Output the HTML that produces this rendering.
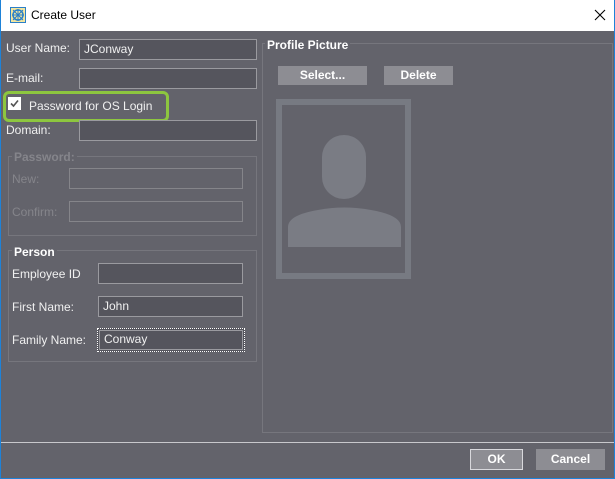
<!DOCTYPE html>
<html><head><meta charset="utf-8"><style>
*{box-sizing:border-box;margin:0;padding:0}
body{width:615px;height:479px;overflow:hidden;background:#1e82d8;font-family:"Liberation Sans",Arial,sans-serif;font-size:12px;position:relative}
.a{position:absolute}
#title{left:1px;top:0;width:613px;height:31px;background:#fff}
#main{left:1px;top:31px;width:613px;height:447px;background:#63636b}
.lbl{color:#f0f0f0;font-size:12px;white-space:nowrap}
.dis{color:#85858b}
.in{background:#55555d;border:1px solid #9a9a9f;color:#f0f0f0;padding:2px 4px;line-height:15px;font-size:12px}
.din{border-color:#85858a;background:#63636b}
.grp{border:1px solid #76767d}
.gt{background:#63636b;padding:0 2px;font-weight:bold;font-size:12px}
.btn{background:#8d8d93;color:#fff;font-weight:bold;text-align:center;font-size:12px}
</style></head><body>
<div id="title" class="a">
 <svg class="a" style="left:9px;top:7px" width="16" height="16" viewBox="0 0 16 16"><rect x="0.5" y="0.5" width="15" height="15" fill="#f3e6a0" stroke="#2a7fc8"/><circle cx="8" cy="8" r="5" fill="none" stroke="#2a7fc8" stroke-width="1.5"/><path d="M3 3L13 13M13 3L3 13M8 2V14M2 8H14" stroke="#2a7fc8" stroke-width="1"/></svg>
 <div class="a" style="left:30px;top:8px;font-size:12px;color:#000">Create User</div>
 <svg class="a" style="left:593px;top:9px" width="12" height="12" viewBox="0 0 12 12"><path d="M1 1L11 11M11 1L1 11" stroke="#000" stroke-width="1.1"/></svg>
</div>
<div id="main" class="a"></div>

<div class="a lbl" style="left:6px;top:41px">User Name:</div>
<div class="a in" style="left:79px;top:39px;width:178px;height:21px">JConway</div>
<div class="a lbl" style="left:6px;top:71px">E-mail:</div>
<div class="a in" style="left:79px;top:68px;width:178px;height:21px"></div>
<div class="a" style="left:3px;top:91px;width:166px;height:31px;border:3px solid #8dc63f;border-radius:6px"></div>
<div class="a" style="left:8px;top:97px;width:13px;height:13px;background:#fff"></div>
<svg class="a" style="left:8px;top:97px" width="13" height="13" viewBox="0 0 13 13"><path d="M3 6.5L5.5 9L10 3.5" fill="none" stroke="#555" stroke-width="1.6"/></svg>
<div class="a lbl" style="left:29px;top:99px">Password for OS Login</div>
<div class="a lbl" style="left:6px;top:123px">Domain:</div>
<div class="a in" style="left:79px;top:120px;width:178px;height:21px"></div>

<div class="a grp" style="left:8px;top:156px;width:249px;height:80px"></div>
<div class="a gt dis" style="left:12px;top:150px">Password:</div>
<div class="a lbl dis" style="left:12px;top:172px">New:</div>
<div class="a in din" style="left:69px;top:168px;width:174px;height:21px"></div>
<div class="a lbl dis" style="left:12px;top:205px">Confirm:</div>
<div class="a in din" style="left:69px;top:201px;width:174px;height:21px"></div>

<div class="a grp" style="left:8px;top:250px;width:249px;height:112px"></div>
<div class="a gt" style="left:12px;top:245px;color:#fff">Person</div>
<div class="a lbl" style="left:12px;top:267px">Employee ID</div>
<div class="a in" style="left:98px;top:263px;width:145px;height:21px"></div>
<div class="a lbl" style="left:12px;top:300px">First Name:</div>
<div class="a in" style="left:98px;top:296px;width:145px;height:21px">John</div>
<div class="a lbl" style="left:12px;top:333px">Family Name:</div>
<div class="a in" style="left:97px;top:328px;width:148px;height:24px;border:1px dotted #fff;padding:1px"><div style="border:1px solid #9a9a9f;height:20px;padding:1px 4px">Conway</div></div>

<div class="a grp" style="left:262px;top:43px;width:351px;height:390px"></div>
<div class="a gt" style="left:265px;top:38px;color:#fff">Profile Picture</div>
<div class="a btn" style="left:278px;top:66px;width:89px;height:19px;line-height:19px">Select...</div>
<div class="a btn" style="left:384px;top:66px;width:69px;height:19px;line-height:19px">Delete</div>
<div class="a" style="left:276px;top:99px;width:135px;height:180px;border:6px solid #777a82"></div>
<div class="a" style="left:322px;top:135px;width:44px;height:64px;border-radius:22px;background:#7a7c84"></div>
<svg class="a" style="left:288px;top:207px" width="113" height="41" viewBox="0 0 113 41"><path d="M0 20Q0 8 30 3Q56 -2 83 3Q113 8 113 20V40H0Z" fill="#7a7c84"/></svg>

<div class="a" style="left:1px;top:442px;width:613px;height:1px;background:#c8c8cc"></div>
<div class="a btn" style="left:470px;top:449px;width:53px;height:21px;line-height:19px;border:1px solid #d8d8dc">OK</div>
<div class="a btn" style="left:536px;top:449px;width:69px;height:21px;line-height:21px">Cancel</div>
</body></html>
